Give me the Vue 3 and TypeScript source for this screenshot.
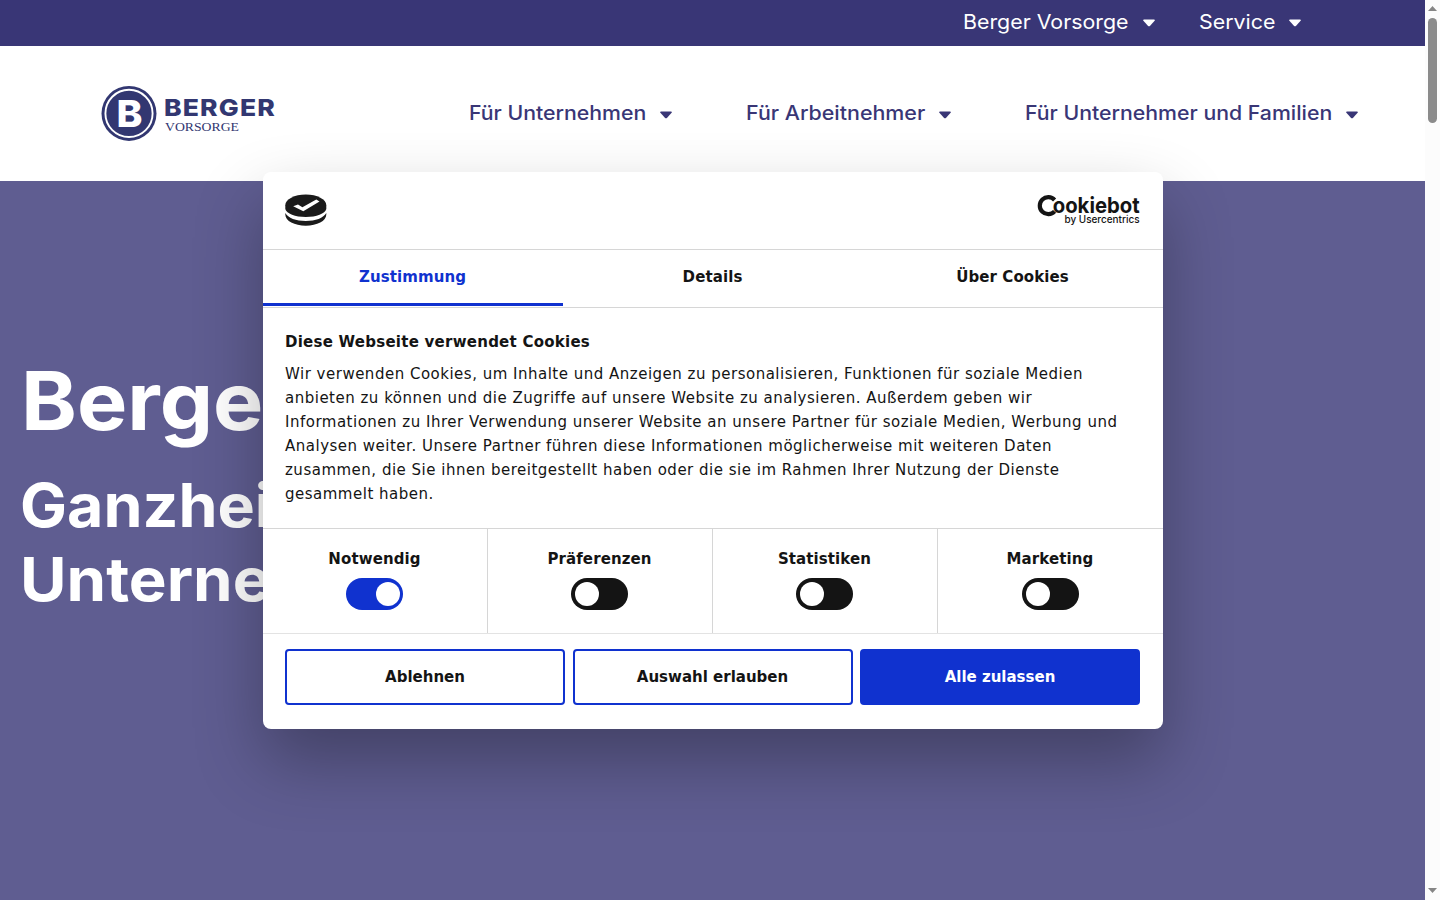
<script setup lang="ts">
import { ref } from 'vue'

interface Toggle { label: string; on: boolean }

const topLinks = [
  { label: 'Berger Vorsorge', cls: 'top-a' },
  { label: 'Service', cls: 'top-b' },
]
const mainLinks = [
  { label: 'Für Unternehmen', cls: 'main-a' },
  { label: 'Für Arbeitnehmer', cls: 'main-b' },
  { label: 'Für Unternehmer und Familien', cls: 'main-c' },
]
const tabs = ['Zustimmung', 'Details', 'Über Cookies']
const activeTab = ref(0)
const toggles = ref<Toggle[]>([
  { label: 'Notwendig', on: true },
  { label: 'Präferenzen', on: false },
  { label: 'Statistiken', on: false },
  { label: 'Marketing', on: false },
])
function flip(index: number): void {
  if (index > 0) toggles.value[index].on = !toggles.value[index].on
}
</script>

<template>
  <div class="screen">
    <div class="page">
      <nav class="topbar">
        <a v-for="link in topLinks" :key="link.label" class="top-link" :class="link.cls">
          <span class="label">{{ link.label }}</span>
          <svg class="caret" width="12" height="8" viewBox="0 0 12 8"><path d="M1 .4h10c.8 0 1.100.8.6 1.400L6.900 6.900c-.5.5-1.300.5-1.800 0L.4 1.800C-.1 1.200.2.4 1 .4z" fill="currentColor" /></svg>
        </a>
      </nav>
      <header class="header">
        <svg class="brand" width="176" height="58" viewBox="0 0 176 58">
          <circle cx="29" cy="28.400" r="27.500" fill="#323771" />
          <circle cx="29" cy="28.400" r="23.600" fill="none" stroke="#fff" stroke-width="1.900" />
          <text class="brand-b" x="16.500" y="42" textLength="26" lengthAdjust="spacingAndGlyphs">B</text>
          <text class="brand-name" x="64" y="30.700" textLength="112" lengthAdjust="spacingAndGlyphs">BERGER</text>
          <text class="brand-sub" x="65" y="45.700" textLength="74" lengthAdjust="spacingAndGlyphs">VORSORGE</text>
        </svg>
        <nav class="main-nav">
          <a v-for="link in mainLinks" :key="link.label" class="main-link" :class="link.cls">
            <span class="label">{{ link.label }}</span>
            <svg class="caret" width="12" height="8" viewBox="0 0 12 8"><path d="M1 .4h10c.8 0 1.100.8.6 1.400L6.900 6.900c-.5.5-1.300.5-1.800 0L.4 1.800C-.1 1.200.2.4 1 .4z" fill="currentColor" /></svg>
          </a>
        </nav>
      </header>
      <main class="hero">
        <h1>Berge</h1>
        <h2><span class="line-a">Ganzhei</span><span class="line-b">Unterne</span></h2>
      </main>
    </div>
    <div class="scrollbar">
      <svg width="9" height="5" viewBox="0 0 9 5"><path d="M0 5 4.500 0 9 5z" fill="#858585" /></svg>
      <div class="thumb"></div>
      <svg class="down" width="9" height="5" viewBox="0 0 9 5"><path d="M0 0h9L4.500 5z" fill="#858585" /></svg>
    </div>

    <section class="dialog" role="dialog">
      <div class="dialog-head">
        <svg width="42" height="32" viewBox="0 0 42 32">
          <path d="M.3 19C3 24 11 27 20.800 27S38.500 24 41.300 19v1.500C41.300 27 32 31.700 20.800 31.700S.3 27 .3 20.500z" fill="#1a1a1a" />
          <path d="M.3 11.300C.3 5.300 9.500.5 20.800.5s20.500 4.800 20.500 10.800v3.700C40 19.500 31.500 23 20.800 23S1.600 19.500.3 15z" fill="#1a1a1a" />
          <path d="M8.200 12.300 13 10.500 17.400 13.200 31.300 5.600l3.200 2L18.300 17.200z" fill="#fff" />
        </svg>
        <svg class="cookiebot" width="104" height="34" viewBox="0 0 104 34">
          <path d="M17.600 6A8.500 8.500 0 1 0 17.600 17.400" fill="none" stroke="#141414" stroke-width="4.200" />
          <text class="cb-name" x="15.700" y="18.700" textLength="87" lengthAdjust="spacingAndGlyphs">ookiebot</text>
          <text class="cb-sub" x="27.500" y="28.600" textLength="75" lengthAdjust="spacingAndGlyphs">by Usercentrics</text>
        </svg>
      </div>
      <div class="tabs">
        <button v-for="(tab, i) in tabs" :key="tab" class="tab" :class="{ active: i === activeTab }" @click="activeTab = i">{{ tab }}</button>
      </div>
      <div class="body">
        <h3>Diese Webseite verwendet Cookies</h3>
        <p>Wir verwenden Cookies, um Inhalte und Anzeigen zu personalisieren, Funktionen für soziale Medien anbieten zu können und die Zugriffe auf unsere Website zu analysieren. Außerdem geben wir Informationen zu Ihrer Verwendung unserer Website an unsere Partner für soziale Medien, Werbung und Analysen weiter. Unsere Partner führen diese Informationen möglicherweise mit weiteren Daten zusammen, die Sie ihnen bereitgestellt haben oder die sie im Rahmen Ihrer Nutzung der Dienste gesammelt haben.</p>
      </div>
      <div class="toggles">
        <div v-for="(item, i) in toggles" :key="item.label" class="toggle-cell">
          <strong>{{ item.label }}</strong>
          <button class="switch" :class="{ on: item.on }" :aria-label="item.label" @click="flip(i)"><span class="knob"></span></button>
        </div>
      </div>
      <div class="actions">
        <button class="btn">Ablehnen</button>
        <button class="btn">Auswahl erlauben</button>
        <button class="btn primary">Alle zulassen</button>
      </div>
    </section>
  </div>
</template>

<style>
html, body { margin: 0; overflow: hidden; }
</style>

<style scoped>
* { box-sizing: border-box; }
.screen { position: relative; display: flex; width: 1440px; height: 900px; overflow: hidden; font-family: Inter, "Open Sans", sans-serif; }
.page { display: flex; flex-direction: column; width: 1425px; height: 900px; }
.topbar { display: flex; height: 46px; padding-left: 963px; gap: 44px; background: #393676; color: #fff; }
.top-link, .main-link { display: flex; align-items: center; white-space: nowrap; justify-content: space-between; }
.label { display: inline-block; transform-origin: left center; }
.top-link { height: 43px; font-size: 20px; }
.top-link .label { transform: scaleX(1.068); }
.top-a { width: 192px; }
.top-b { width: 102px; }
.caret { flex: none; position: relative; top: 1.500px; }
.header { display: flex; height: 135px; padding: 39px 0 0 100px; background: #fff; color: #393676; }
.brand { flex: none; }
.brand-b { font: 800 37.500px Inter, sans-serif; fill: #fff; }
.brand-name { font: 800 23px Inter, sans-serif; fill: #323771; letter-spacing: 1px; }
.brand-sub { font: 13.500px "Liberation Serif", serif; fill: #323771; }
.main-nav { display: flex; height: 56px; margin-left: 193px; gap: 74px; }
.main-link { font-size: 19.800px; font-weight: 500; }
.main-link .label { transform: scaleX(1.075); }
.main-link.main-b .label { transform: scaleX(1.082); }
.main-a { width: 203px; }
.main-b { width: 205px; }
.main-c { width: 333px; }
.hero { flex: 1; padding: 172px 0 0 21px; background: #5f5d91; color: #fff; overflow: hidden; }
h1 { margin: 0; font-size: 80.500px; line-height: 96px; font-weight: 700; transform: scaleX(1.05); transform-origin: left center; }
h2 { margin: 19px 0 0 -1px; font-size: 60px; line-height: 74px; font-weight: 700; }
h2 span { display: block; transform-origin: left center; }
.line-a { transform: scaleX(1.045); }
.line-b { transform: scaleX(1.06); }
.scrollbar { display: flex; flex-direction: column; align-items: center; width: 15px; height: 900px; padding: 6px 0 7px; background: #fcfcfc; }
.scrollbar svg { flex: none; }
.thumb { width: 9px; height: 105px; margin-top: 7px; border-radius: 5px; background: #8b8b8b; }
.down { margin-top: auto; }

.dialog { position: absolute; left: 262.500px; top: 172px; width: 900px; height: 556.500px; border-radius: 8px; background: #fff; color: #141414; box-shadow: 0 32px 68px rgba(0, 0, 0, .3); font: 15px/24px "DejaVu Sans", sans-serif; }
.dialog-head { display: flex; justify-content: space-between; height: 78px; padding: 22px 22px 0; border-bottom: 1px solid #d6d6d6; }
.cb-name { font: 700 22px Inter, sans-serif; fill: #141414; }
.cb-sub { font: 500 10.300px Inter, sans-serif; fill: #141414; }
.tabs { display: grid; grid-template-columns: repeat(3, 1fr); height: 58px; border-bottom: 1px solid #d6d6d6; }
button { margin: 0; padding: 0; border: 0; background: none; color: inherit; font: 700 15px/24px "DejaVu Sans", sans-serif; }
.tab { height: 56px; padding-top: 1px; border-bottom: 3px solid transparent; letter-spacing: .1px; }
.tab.active { color: #1032cf; border-bottom-color: #1032cf; }
.body { height: 221px; padding: 22px 22px 0 22.500px; border-bottom: 1px solid #d6d6d6; }
h3 { margin: 0 0 8px; font-size: 15px; line-height: 24px; font-weight: 700; letter-spacing: .25px; }
p { margin: 0; letter-spacing: .5px; }
.toggles { display: grid; grid-template-columns: repeat(4, 1fr); height: 105px; border-bottom: 1px solid #e3e3e3; }
.toggle-cell { display: flex; flex-direction: column; align-items: center; padding-top: 18px; border-right: 1px solid #d6d6d6; }
.toggle-cell:last-child { border-right: 0; }
.toggle-cell strong { line-height: 24px; letter-spacing: .1px; }
.switch { display: flex; align-items: center; width: 57px; height: 32px; margin-top: 7px; padding: 0 4px; border-radius: 16px; background: #141414; }
.switch.on { justify-content: flex-end; padding-right: 3px; background: #1032cf; }
.knob { width: 24px; height: 24px; border-radius: 50%; background: #fff; }
.actions { display: grid; grid-template-columns: repeat(3, 280px); justify-content: space-between; padding: 15px 22.500px 0; }
.btn { height: 56px; border: 2px solid #1032cf; border-radius: 4px; }
.btn.primary { background: #1032cf; color: #fff; }
</style>
